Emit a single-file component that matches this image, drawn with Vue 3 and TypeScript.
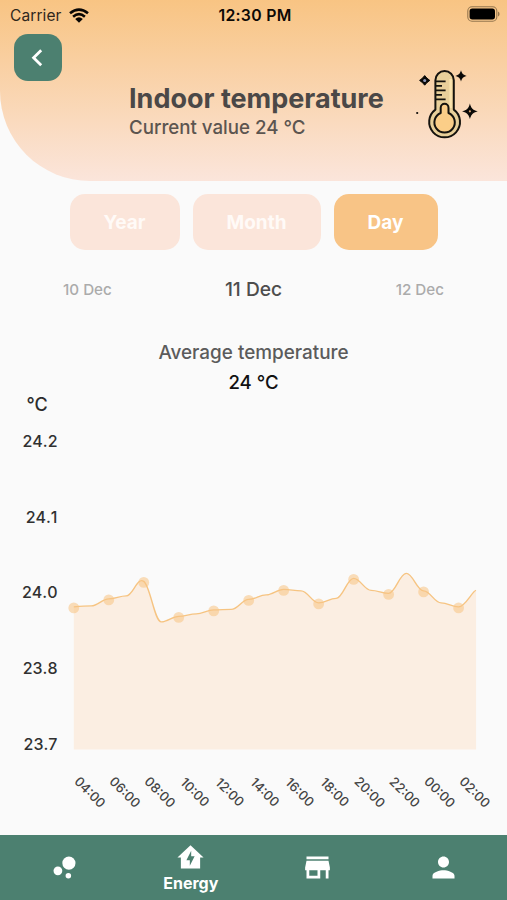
<script setup lang="ts">
interface Point {
  x: number
  y: number
}

const periods = [
  { label: 'Year', kind: 'year', active: false },
  { label: 'Month', kind: 'month', active: false },
  { label: 'Day', kind: 'day', active: true },
]

const yTicks = ['24.2', '24.1', '24.0', '23.8', '23.7']
const xTicks = [
  '04:00', '06:00', '08:00', '10:00', '12:00', '14:00',
  '16:00', '18:00', '20:00', '22:00', '00:00', '02:00',
]

// One reading per hour, as a height above the chart's baseline.
const readings = [
  142.5, 143.5, 150.5, 153.5, 168, 127.5, 133, 135.5, 139.5, 140, 150, 154.5,
  160, 158.5, 146.5, 151, 171, 159, 156, 176, 158.5, 146.5, 142.5, 159,
]
const step = 17.49
const left = 73.8
const base = 329.4

const points: Point[] = readings.map((r, i) => ({ x: left + i * step, y: base - r }))
const dots = points.filter((_, i) => i % 2 === 0)

// Smooths the line, keeping it level at any point next to a small change.
function smoothPath(pts: Point[]): string {
  let path = `M${pts[0].x} ${pts[0].y}`
  let tx = 0
  let ty = 0
  for (let i = 1; i < pts.length; i++) {
    const prev = pts[i - 1]
    const cur = pts[i]
    const next = pts[i + 1] ?? cur
    const c1x = prev.x + tx
    const c1y = prev.y + ty
    tx = ((next.x - prev.x) / 2) * 0.38
    ty = ((next.y - prev.y) / 2) * 0.38
    if (Math.abs(next.y - cur.y) <= 13.5 || Math.abs(cur.y - prev.y) <= 13.5) ty = 0
    path += ` C${c1x} ${c1y} ${cur.x - tx} ${cur.y - ty} ${cur.x} ${cur.y}`
  }
  return path
}

const line = smoothPath(points)
const area = `${line} V${base} H${left} Z`
</script>

<template>
  <main class="screen">
    <header class="hero">
      <div class="status">
        <div class="carrier">
          <span>Carrier</span>
          <svg class="wifi" viewBox="0 0 20 15">
            <path d="M1 5.3Q10-2.2 19 5.3M4.1 8.7Q10 3.7 15.9 8.7" fill="none" stroke="#080604" stroke-width="2.6" />
            <path d="M6.2 11Q10 7.6 13.8 11L10 14.8Z" fill="#080604" />
          </svg>
        </div>
        <span class="time">12:30 PM</span>
        <svg class="battery" viewBox="0 0 33 16">
          <rect x="0.8" y="0.8" width="29" height="14.4" rx="4.2" fill="none" stroke="#95774f" stroke-width="1.1" />
          <rect x="2.6" y="2.6" width="25.4" height="10.8" rx="2.7" fill="#000" />
          <path d="M31 5.6Q32.6 6.2 32.6 8T31 10.4Z" fill="#95774f" />
        </svg>
      </div>
      <button class="back" aria-label="Back">
        <svg viewBox="0 0 48 48"><path d="M27.2 16.2 19.6 23.7 27.2 31.2" fill="none" stroke="#fff" stroke-width="2.8" /></svg>
      </button>
      <div class="summary">
        <div>
          <h1>Indoor temperature</h1>
          <p>Current value 24 °C</p>
        </div>
        <svg class="thermo" viewBox="0 0 75 85">
          <g stroke="#15130e" stroke-linejoin="round">
            <path d="M25.4 49.6V20.2A9.2 9.2 0 0 1 43.8 20.2V49.6A15.4 15.4 0 1 1 25.4 49.6Z" fill="#e9d09a" stroke-width="2" />
            <path d="M40.600 19V48" fill="none" stroke="#fbe4ae" stroke-width="2.400" />
            <path d="M30.700 53V47.700A3.900 3.900 0 0 1 38.500 47.700V53A10.200 10.200 0 1 1 30.700 53Z" fill="#fbce88" stroke-width="2" />
            <path d="M26 21.3H35.600M26 25.800H32M26 30.300H35.600M26 34.800H32M26 39.300H35.600" fill="none" stroke-width="1.800" />
          </g>
          <g fill="#090806">
            <path d="M14.7 15.6Q16.700 18.500 19.800 20.4Q16.700 22.300 14.7 25.200Q12.700 22.300 9.600 20.4Q12.700 18.500 14.7 15.6Z" stroke="#090806" stroke-width="1" />
            <path d="M51 12.200Q51.9 15 54.700 15.9Q51.9 16.8 51 19.600Q50.1 16.8 47.300 15.9Q50.1 15 51 12.200Z" stroke="#090806" stroke-width="1.200" />
            <path d="M59.9 45.600Q61.2 50 65.600 51.3Q61.2 52.6 59.9 57Q58.6 52.6 54.200 51.3Q58.6 50 59.9 45.600Z" stroke="#090806" stroke-width="1.200" />
            <circle cx="7.2" cy="53" r="1.1" />
          </g>
          <circle cx="14.7" cy="20.4" r="1.5" fill="#929bbc" />
          <circle cx="59.9" cy="51.3" r="1.1" fill="#dba675" />
        </svg>
      </div>
    </header>

    <nav class="periods">
      <button v-for="p in periods" :key="p.kind" :class="['period', p.kind, { active: p.active }]">{{ p.label }}</button>
    </nav>

    <div class="dates">
      <span>10 Dec</span>
      <strong>11 Dec</strong>
      <span>12 Dec</span>
    </div>

    <section class="average">
      <h2>Average temperature</h2>
      <p>24 °C</p>
    </section>

    <svg class="chart" viewBox="0 0 507 414">
      <path :d="area" fill="#fbeee2" />
      <path :d="line" fill="none" stroke="#f6c482" stroke-width="1.4" />
      <circle v-for="d in dots" :key="d.x" :cx="d.x" :cy="d.y + 1" r="5.4" fill="#f8c484" fill-opacity="0.56" />
      <g class="y-labels">
        <text v-for="(t, i) in yTicks" :key="t" x="57.5" :y="26.8 + i * 75.8">{{ t }}</text>
      </g>
      <g class="x-labels">
        <text
          v-for="(t, i) in xTicks"
          :key="t"
          :transform="`translate(${90 + i * 34.98} 372.2) rotate(45)`"
          y="4.6"
        >{{ t }}</text>
      </g>
      <text class="unit" x="26.5" y="-9">°C</text>
    </svg>

    <footer class="tabs">
      <a class="tab">
        <svg viewBox="0 0 24 24"><circle cx="7.2" cy="14.4" r="3.2" /><circle cx="14.8" cy="18" r="2" /><circle cx="15.2" cy="8.8" r="4.8" /></svg>
      </a>
      <a class="tab current">
        <svg viewBox="0 0 24 24"><path d="M12 3 2.5 12H5v8h14v-8h2.500L12 3ZM11.500 18v-4H9l3.500-7v4H15l-3.500 7Z" /></svg>
        <span>Energy</span>
      </a>
      <a class="tab">
        <svg viewBox="0 0 24 24"><path d="M20 4H4v2h16V4zm1 10v-2l-1-5H4l-1 5v2h1v6h10v-6h4v6h2v-6h1zm-9 4H6v-4h6v4z" /></svg>
      </a>
      <a class="tab">
        <svg viewBox="0 0 24 24"><path d="M12 12c2.210 0 4-1.790 4-4s-1.790-4-4-4-4 1.790-4 4 1.790 4 4 4zm0 2c-2.670 0-8 1.340-8 4v2h16v-2c0-2.660-5.330-4-8-4z" /></svg>
      </a>
    </footer>
  </main>
</template>

<style>
body {
  margin: 0;
  background: #fafafa;
}
</style>

<style scoped>
.screen {
  display: flex;
  flex-direction: column;
  width: 507px;
  height: 900px;
  overflow: hidden;
  background: #fafafa;
  font-family: Inter, 'Liberation Sans', sans-serif;
}
h1, h2, p {
  margin: 0;
}
button {
  border: 0;
  padding: 0;
  font-family: inherit;
}
svg {
  display: block;
}
.hero {
  height: 181px;
  flex: none;
  border-bottom-left-radius: 90px;
  background: linear-gradient(#f8c483, #fbe5db);
}
.status {
  display: grid;
  grid-template-columns: 1fr auto 1fr;
  align-items: center;
  height: 30px;
  padding: 0 7px 0 10px;
}
.carrier {
  display: flex;
  align-items: center;
  gap: 7px;
  font-size: 15.5px;
  letter-spacing: 0.1px;
  color: #30271c;
}
.wifi {
  width: 20px;
  height: 15px;
}
.time {
  font-size: 15.8px;
  font-weight: 600;
  letter-spacing: 0.3px;
  color: #0d0905;
}
.battery {
  justify-self: end;
  width: 33px;
  height: 16px;
  margin-top: -2px;
}
.back {
  display: block;
  width: 48px;
  height: 47px;
  margin: 4px 0 0 14px;
  border-radius: 14px;
  background: #4c8070;
}
.summary {
  display: flex;
  justify-content: space-between;
  margin: -21px 22px 0 129px;
}
.summary > div {
  padding-top: 23px;
}
h1 {
  font-size: 27px;
  line-height: 32px;
  font-weight: 700;
  color: #4b4847;
  white-space: nowrap;
}
.summary p {
  font-size: 18.7px;
  line-height: 26px;
  font-weight: 500;
  color: #5c5550;
}
.thermo {
  width: 75px;
  height: 85px;
}
.periods {
  display: flex;
  justify-content: center;
  gap: 13px;
  margin-top: 13px;
}
.period {
  height: 56px;
  border-radius: 15px;
  background: #fbe5da;
  color: #fffaf7;
  font-size: 19px;
  font-weight: 700;
}
.year { width: 110px; }
.month { width: 128px; }
.day { width: 104px; }
.active {
  background: #f8c486;
  color: #fff;
}
.dates {
  display: grid;
  grid-template-columns: 1fr auto 1fr;
  align-items: center;
  height: 24px;
  margin: 27px 63px 0;
  font-size: 15.2px;
  font-weight: 500;
  color: #ababab;
}
.dates strong {
  font-size: 19.2px;
  font-weight: 500;
  color: #4d4d4d;
}
.dates span:last-child {
  justify-self: end;
}
.average {
  margin-top: 38px;
  text-align: center;
}
h2 {
  font-size: 18.9px;
  line-height: 28px;
  font-weight: 500;
  color: #5b5b5b;
}
.average p {
  font-size: 18.6px;
  line-height: 31px;
  font-weight: 500;
  color: #111;
}
.chart {
  width: 507px;
  height: 414px;
  flex: none;
  margin-top: 22px;
  overflow: visible;
}
.y-labels {
  font-size: 16px;
  font-weight: 500;
  font-kerning: none;
  fill: #303030;
  text-anchor: end;
}
.x-labels {
  font-size: 13px;
  font-weight: 500;
  font-kerning: none;
  fill: #444;
  text-anchor: middle;
}
.unit {
  font-size: 18px;
  font-weight: 500;
  fill: #2c2c2c;
}
.tabs {
  display: grid;
  grid-template-columns: repeat(4, 1fr);
  height: 65.5px;
  flex: none;
  margin-top: auto;
  padding-left: 1px;
  background: #4c8070;
}
.tab {
  display: flex;
  flex-direction: column;
  align-items: center;
  justify-content: center;
  color: #fff;
}
.tab svg {
  width: 33px;
  height: 33px;
  fill: #fff;
}
.current {
  padding-bottom: 1px;
}
.tab span {
  margin-top: -1px;
  font-size: 16px;
  line-height: 20px;
  font-weight: 700;
}
</style>
